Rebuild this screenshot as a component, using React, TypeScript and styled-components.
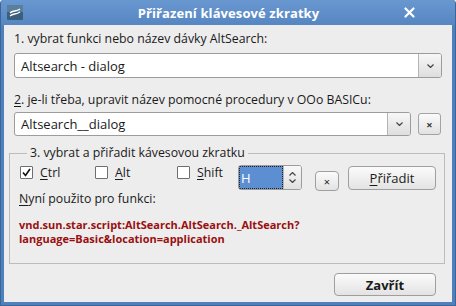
import React from "react";
import styled, { createGlobalStyle } from "styled-components";

const Global = createGlobalStyle`
  html, body { margin: 0; padding: 0; background: #ededed; }
  body { font-family: "Open Sans", "DejaVu Sans", sans-serif; }
`;

const Window = styled.div`
  width: 456px;
  height: 306px;
  box-sizing: border-box;
  background: #4f80bb;
  display: flex;
  flex-direction: column;
  padding: 0 3px 3px 3px;
  border: 1px solid #3b6698;
  border-top: none;
  border-radius: 4px 4px 0 0;
  overflow: hidden;
`;

const TitleBar = styled.div`
  height: 25px;
  display: flex;
  align-items: center;
  margin: 0 -3px;
  padding: 0 6px;
  background: linear-gradient(#6997d0, #5686c2);
  color: #fff;
  font-weight: 700;
  font-size: 13px;
`;

const TitleText = styled.div`
  flex: 1;
  text-align: center;
  letter-spacing: 0.1px;
  padding-left: 30px;
`;

const Body = styled.div`
  flex: 1;
  background: #ededed;
  display: flex;
  flex-direction: column;
  padding: 0 10px;
  font-size: 12.3px;
  color: #1a1a1a;
`;

const Label = styled.div<{ $top: number }>`
  margin-top: ${(p) => p.$top}px;
  height: 18px;
  line-height: 18px;
  white-space: nowrap;
`;

const Row = styled.div<{ $top: number }>`
  display: flex;
  align-items: center;
  margin-top: ${(p) => p.$top}px;
`;

const Combo = styled.div<{ $w: number; $h: number }>`
  width: ${(p) => p.$w}px;
  height: ${(p) => p.$h}px;
  box-sizing: border-box;
  border: 1px solid #9c9c9c;
  border-radius: 3px;
  background: #fff;
  display: flex;
  overflow: hidden;
`;

const ComboText = styled.div`
  flex: 1;
  padding-left: 6px;
  display: flex;
  align-items: center;
  white-space: nowrap;
  font-size: 13px;
`;

const DropBtn = styled.div<{ $w: number }>`
  width: ${(p) => p.$w}px;
  border-left: 1px solid #b4b4b4;
  background: linear-gradient(#f7f7f7, #dedede);
  display: flex;
  align-items: center;
  justify-content: center;
`;

const SmallBtn = styled.div<{ $ml: number }>`
  margin-left: ${(p) => p.$ml}px;
  width: 23px;
  height: 22px;
  box-sizing: border-box;
  border: 1px solid #a3a3a3;
  border-radius: 3px;
  background: linear-gradient(#fafafa, #e2e2e2);
  display: flex;
  align-items: center;
  justify-content: center;
  font-size: 11px;
  font-weight: 700;
  color: #333;
`;

const Group = styled.fieldset`
  margin: 9px 0 0 -5px;
  width: 436px;
  height: 119px;
  box-sizing: border-box;
  border: 1px solid #bcbcbc;
  padding: 0 0 0 9px;
  display: flex;
  flex-direction: column;
`;

const Legend = styled.legend`
  padding: 0 3px;
  margin-left: 8px;
  line-height: 16px;
`;

const CheckRow = styled.div`
  display: flex;
  align-items: flex-start;
  height: 31px;
  margin-top: -2px;
`;

const Check = styled.label<{ $w: number; $ml?: number }>`
  width: ${(p) => p.$w}px;
  margin-left: ${(p) => p.$ml ?? 0}px;
  height: 26px;
  display: flex;
  align-items: center;
  gap: 7px;
`;

const Box = styled.span`
  width: 13px;
  height: 13px;
  box-sizing: border-box;
  border: 1px solid #6e6e6e;
  border-radius: 1px;
  background: #fff;
  display: flex;
  align-items: center;
  justify-content: center;
`;

const U = styled.span`
  text-decoration: underline;
  text-underline-offset: 2px;
`;

const Spin = styled.div`
  margin-top: 6px;
  width: 64px;
  height: 25px;
  box-sizing: border-box;
  border: 1px solid #9c9c9c;
  border-radius: 3px;
  background: #fff;
  display: flex;
  overflow: hidden;
`;

const SpinField = styled.div`
  width: 44px;
  background: #5b8fd2;
  color: #fff;
  outline: 1px dotted #222;
  outline-offset: -1px;
  padding-left: 2px;
  display: flex;
  align-items: center;
  box-sizing: border-box;
  font-size: 13px;
`;

const SpinBtn = styled.div`
  flex: 1;
  background: linear-gradient(#f8f8f8, #e0e0e0);
  border-left: 1px solid #b4b4b4;
  display: flex;
  align-items: center;
  justify-content: center;
`;

const SpinArrows = styled.div`
  display: flex;
  flex-direction: column;
  gap: 3px;
`;

const PushBtn = styled.div<{ $w: number; $h: number; $ml: number; $mt: number; $bold?: boolean; $fs?: number }>`
  margin-left: ${(p) => p.$ml}px;
  margin-top: ${(p) => p.$mt}px;
  width: ${(p) => p.$w}px;
  height: ${(p) => p.$h}px;
  box-sizing: border-box;
  border: 1px solid #9f9f9f;
  border-radius: 4px;
  background: linear-gradient(#fbfbfb, #e3e3e3);
  display: flex;
  align-items: center;
  justify-content: center;
  font-weight: ${(p) => (p.$bold ? 700 : 400)};
  font-size: ${(p) => p.$fs ?? 13}px;
`;

const Info = styled.div`
  height: 18px;
  line-height: 18px;
`;

const Script = styled.div`
  margin-top: 10px;
  color: #9a0f0f;
  font-weight: 700;
  font-size: 11px;
  line-height: 13.5px;
  white-space: nowrap;
`;

const ScriptLine = styled.div`
  height: 13.5px;
`;

const Footer = styled.div`
  display: flex;
  justify-content: flex-end;
  padding-right: 6px;
`;

const Chevron = ({ up }: { up?: boolean }) => (
  <svg width="7" height="4" viewBox="0 0 7 4">
    <path d={up ? "M0.5 3.5 L3.5 0.5 L6.5 3.5" : "M0.5 0.5 L3.5 3.5 L6.5 0.5"} fill="none" stroke="#444" strokeWidth="1.2" />
  </svg>
);

const Icon = () => (
  <svg width="16" height="15" viewBox="0 0 16 15">
    <rect x="0" y="0" width="16" height="15" rx="1" fill="#3a5f7c" />
    <rect x="0" y="0" width="16" height="7" fill="#5a7f9c" />
    <path d="M3 8 C6 5, 9 7, 13 4 M3 11 C6 8, 9 10, 13 7" stroke="#fff" strokeWidth="1.3" fill="none" />
  </svg>
);

const CloseX = () => (
  <svg width="11" height="11" viewBox="0 0 11 11">
    <path d="M1.5 1.5 L9.5 9.5 M9.5 1.5 L1.5 9.5" stroke="#fff" strokeWidth="2.2" strokeLinecap="round" />
  </svg>
);

const Tick = () => (
  <svg width="9" height="9" viewBox="0 0 9 9">
    <path d="M1 4.5 L3.5 7.5 L8 1" fill="none" stroke="#111" strokeWidth="1.6" />
  </svg>
);

const Spacer = styled.span`
  width: 34px;
`;

export default function App() {
  return (
    <>
      <Global />
      <Window>
        <TitleBar>
          <Icon />
          <TitleText>Přiřazení klávesové zkratky</TitleText>
          <CloseX />
          <Spacer />
        </TitleBar>
        <Body>
          <Label $top={5}>1. vybrat funkci nebo název dávky AltSearch:</Label>
          <Row $top={5}>
            <Combo $w={430} $h={25}>
              <ComboText>Altsearch - dialog</ComboText>
              <DropBtn $w={22}><Chevron /></DropBtn>
            </Combo>
          </Row>
          <Label $top={13}><U>2</U>. je-li třeba, upravit název pomocné procedury v OOo BASICu:</Label>
          <Row $top={3}>
            <Combo $w={397} $h={24}>
              <ComboText>Altsearch__dialog</ComboText>
              <DropBtn $w={22}><Chevron /></DropBtn>
            </Combo>
            <SmallBtn $ml={7}>×</SmallBtn>
          </Row>
          <Group>
            <Legend>3. vybrat a přiřadit kávesovou zkratku</Legend>
            <CheckRow>
              <Check $w={75} $ml={1}><Box><Tick /></Box><span><U>C</U>trl</span></Check>
              <Check $w={82}><Box /><span><U>A</U>lt</span></Check>
              <Check $w={61}><Box /><span><U>S</U>hift</span></Check>
              <Spin>
                <SpinField>H</SpinField>
                <SpinBtn>
                  <SpinArrows>
                    <Chevron up />
                    <Chevron />
                  </SpinArrows>
                </SpinBtn>
              </Spin>
              <PushBtn $w={24} $h={20} $ml={13} $mt={12} $fs={11}>×</PushBtn>
              <PushBtn $w={88} $h={24} $ml={9} $mt={7}><span><U>P</U>řiřadit</span></PushBtn>
            </CheckRow>
            <Info><U>N</U>yní použito pro funkci:</Info>
            <Script>
              <ScriptLine>vnd.sun.star.script:AltSearch.AltSearch._AltSearch?</ScriptLine>
              <ScriptLine>language=Basic&amp;location=application</ScriptLine>
            </Script>
          </Group>
          <Footer>
            <PushBtn $w={102} $h={23} $ml={0} $mt={9} $bold>Zavřít</PushBtn>
          </Footer>
        </Body>
      </Window>
    </>
  );
}
